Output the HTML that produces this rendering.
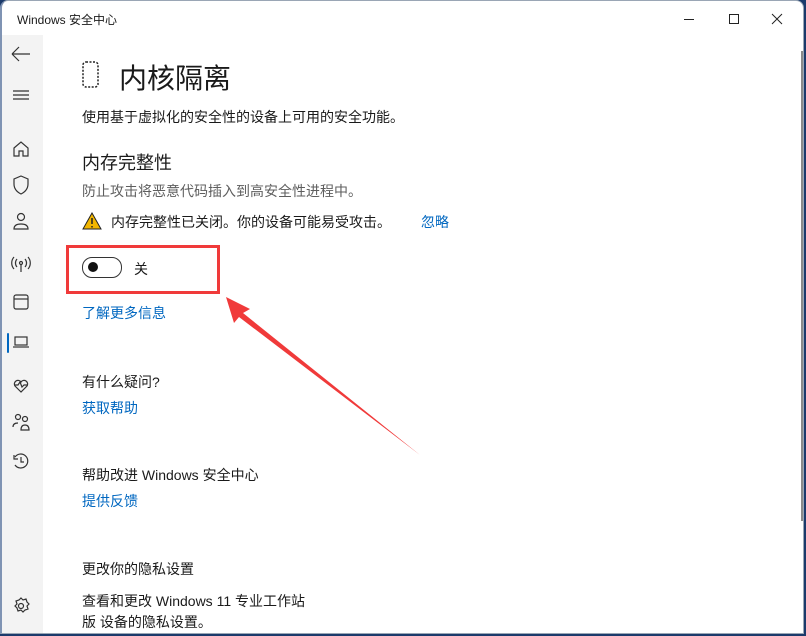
<!DOCTYPE html>
<html><head><meta charset="utf-8"><style>
*{margin:0;padding:0;box-sizing:border-box}
body{width:806px;height:636px;background:#1b3a6b;position:relative;overflow:hidden;font-family:"Liberation Sans","Noto Sans CJK SC",sans-serif;color:#1a1a1a}
#win{position:absolute;left:0;top:0;width:804px;height:634px;background:#fff;border:1px solid #9aa6b5;border-left:2px solid #7f93b3;border-radius:8px 8px 0 0;overflow:hidden}
#side{position:absolute;left:0;top:34px;width:41px;height:600px;background:#f3f3f3}
.t{position:absolute;white-space:nowrap}
.ic{position:absolute}
.link{color:#0067c0;font-size:14px}
</style></head><body>
<div id="win">
<div class="t" style="left:15px;top:10px;font-size:12px">Windows 安全中心</div>
<svg class="ic" style="left:670px;top:8px" width="125" height="20" fill="none" stroke="#222" stroke-width="1">
<path d="M12 10.5h10"/><rect x="57.5" y="5.5" width="9" height="9"/><path d="M100 5l10 10M110 5l-10 10"/></svg>
<div id="side"></div>
<div style="position:absolute;left:799px;top:50px;width:2px;height:470px;background:#8a8a8a"></div>
<svg class="ic" style="left:-2px;top:34px" width="42" height="600" fill="none" stroke="#333" stroke-width="1.2">
<path d="M12 19h18M12 19l7-7M12 19l7 7"/>
<path d="M13 56h16M13 60h16M13 64h16"/>
<path d="M14 113l7-6 7 6v8h-5v-5h-4v5h-5z"/>
<path d="M21 141l7 3v5c0 5-3 8-7 10-4-2-7-5-7-10v-5z"/>
<circle cx="21" cy="182" r="3.5"/><path d="M14 194c0-4 3-5 7-5s7 1 7 5z"/>
<circle cx="21" cy="228" r="1.5"/><path d="M21 230v7M17 224a6 6 0 0 0 0 8M25 224a6 6 0 0 1 0 8M14 222a9 9 0 0 0 0 12M28 222a9 9 0 0 1 0 12"/>
<rect x="14" y="260" width="14" height="14" rx="2"/><path d="M14 264h14"/>
<rect x="15" y="302" width="12" height="8"/><path d="M13 312h16"/>
<path d="M21 357l-6-6a3.5 3.5 0 0 1 6-4 3.5 3.5 0 0 1 6 4z"/><path d="M14 350h4l2-3 2 5 2-2h4"/>
<circle cx="18" cy="382" r="2.5"/><circle cx="25" cy="384" r="2.5"/><path d="M13 392c0-3 2-4 5-4M21 395c0-4 2-5 4-5s4 1 4 5z"/>
<path d="M15 422a7 7 0 1 1 0 8M21 422v5h3M14 420v4h4"/>
<circle cx="21" cy="571" r="2.5"/><path d="M21 563l2 2 3-1 1 3 2 2-2 2 1 3-3 1-2 2-2-2-3 1-1-3-2-2 2-2-1-3 3-1z"/>
</svg>
<div style="position:absolute;left:5px;top:332px;width:2px;height:20px;background:#0067c0;border-radius:1px"></div>
<svg class="ic" style="left:78px;top:58px" width="24" height="32" fill="none" stroke="#222" stroke-width="1.5" stroke-dasharray="2 1.5"><rect x="3" y="3" width="15" height="25" rx="3"/></svg>
<div class="t" style="left:117px;top:56px;font-size:28px">内核隔离</div>
<div class="t" style="left:80px;top:106px;font-size:14px">使用基于虚拟化的安全性的设备上可用的安全功能。</div>
<div class="t" style="left:80px;top:148px;font-size:18px">内存完整性</div>
<div class="t" style="left:80px;top:180px;font-size:14px;color:#5e5e5e">防止攻击将恶意代码插入到高安全性进程中。</div>
<svg class="ic" style="left:80px;top:211px" width="20" height="18"><path d="M10 1l9 16H1z" fill="#f2b600" stroke="#222" stroke-width="1"/><path d="M10 6v6M10 14v1.5" stroke="#222" stroke-width="1.5"/></svg>
<div class="t" style="left:109px;top:211px;font-size:14px">内存完整性已关闭。你的设备可能易受攻击。</div>
<div class="t link" style="left:419px;top:211px">忽略</div>
<div style="position:absolute;left:80px;top:256px;width:40px;height:21px;border:1px solid #333;border-radius:10px"></div>
<div style="position:absolute;left:86px;top:261px;width:10px;height:10px;background:#111;border-radius:50%"></div>
<div class="t" style="left:132px;top:258px;font-size:14px">关</div>
<div style="position:absolute;left:64px;top:244px;width:154px;height:49px;border:3px solid #f03a3a"></div>
<div class="t link" style="left:80px;top:302px">了解更多信息</div>
<div class="t" style="left:80px;top:371px;font-size:14px">有什么疑问?</div>
<div class="t link" style="left:80px;top:397px">获取帮助</div>
<div class="t" style="left:80px;top:464px;font-size:14px">帮助改进 Windows 安全中心</div>
<div class="t link" style="left:80px;top:490px">提供反馈</div>
<div class="t" style="left:80px;top:558px;font-size:14px">更改你的隐私设置</div>
<div class="t" style="left:80px;top:590px;font-size:14px">查看和更改 Windows 11 专业工作站</div>
<div class="t" style="left:80px;top:611px;font-size:14px">版 设备的隐私设置。</div>
</div>
<svg class="ic" style="left:0;top:0" width="806" height="636"><path d="M226 297l8 26 5-6 181 138-177-142 7-4z" fill="#f03a3a"/></svg>
</body></html>
